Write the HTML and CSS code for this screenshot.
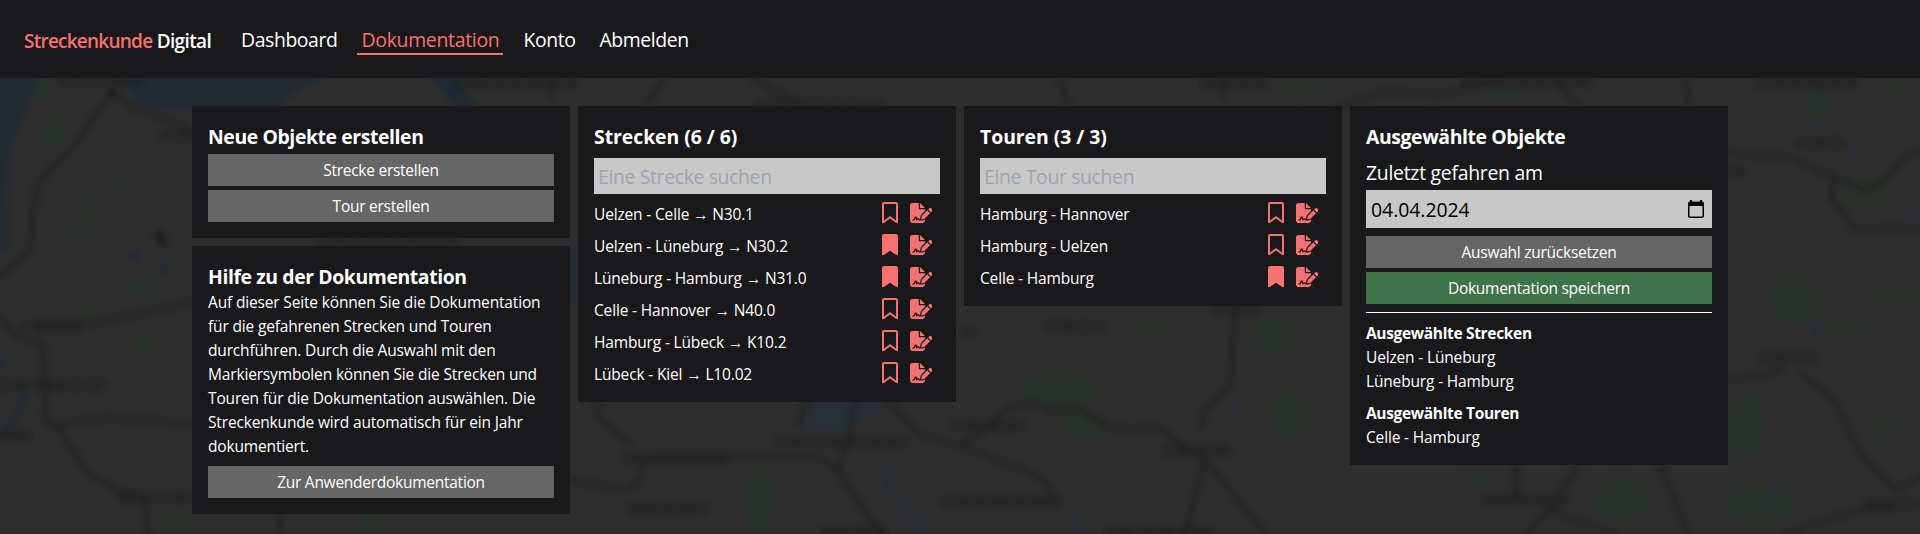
FILE: index.html
```html
<!DOCTYPE html>
<html lang="de">
<head>
<meta charset="utf-8">
<title>Streckenkunde Digital</title>
<link rel="stylesheet" href="styles.css">
</head>
<body>
<svg class="defs" width="0" height="0" aria-hidden="true">
  <symbol id="mark" viewBox="0 0 384 512"><path d="M0 48C0 21.500 21.500 0 48 0V441.400l130.100-92.900c8.300-6 19.600-6 27.900 0L336 441.400V48H48V0H336c26.500 0 48 21.500 48 48V488c0 9-5 17.200-13 21.300s-17.600 3.400-24.900-1.800L192 397.500 37.900 507.500c-7.300 5.200-16.900 5.900-24.900 1.800S0 497 0 488V48z"/></symbol>
  <symbol id="marked" viewBox="0 0 384 512"><path d="M0 48V487.700C0 501.100 10.900 512 24.300 512c5 0 9.900-1.500 14-4.400L192 400 345.700 507.600c4.100 2.900 9 4.400 14 4.400c13.400 0 24.300-10.900 24.300-24.300V48c0-26.500-21.500-48-48-48H48C21.500 0 0 21.500 0 48z"/></symbol>
  <symbol id="sign" viewBox="0 0 576 512"><path d="M64 0C28.700 0 0 28.700 0 64V448c0 35.300 28.700 64 64 64H320c35.300 0 64-28.700 64-64V428.700c-2.700 1.100-5.400 2-8.200 2.700l-60.100 15c-3 .7-6 1.200-9 1.400c-.9 .1-1.800 .2-2.700 .2H240c-6.100 0-11.600-3.400-14.300-8.800l-8.800-17.700c-1.700-3.400-5.100-5.500-8.800-5.500s-7.200 2.100-8.800 5.500l-8.800 17.700c-2.900 5.900-9.200 9.400-15.700 8.800s-12.100-5.100-13.900-11.300L144 381l-9.800 32.800c-6.100 20.300-24.800 34.200-46 34.200H80c-8.800 0-16-7.200-16-16s7.200-16 16-16h8.200c7.100 0 13.300-4.600 15.300-11.400l14.900-49.500c3.400-11.300 13.800-19.100 25.600-19.100s22.200 7.700 25.600 19.100l11.600 38.600c7.400-6.200 16.800-9.700 26.800-9.700c15.900 0 30.400 9 37.500 23.200l4.400 8.800h8.900c-3.100-8.800-3.700-18.400-1.400-27.800l15-60.100c2.800-11.300 8.600-21.500 16.800-29.700L384 203.600V160H256c-17.700 0-32-14.300-32-32V0H64zM256 0V128H384L256 0zM549.800 139.700c-15.600-15.600-40.900-15.600-56.600 0l-29.400 29.400 71 71 29.400-29.400c15.600-15.600 15.600-40.900 0-56.600l-14.400-14.400zM311.900 321c-4.100 4.100-7 9.200-8.400 14.900l-15 60.100c-1.400 5.500 .2 11.200 4.200 15.200s9.700 5.600 15.200 4.200l60.100-15c5.600-1.400 10.800-4.300 14.900-8.400L512.100 262.700l-71-71L311.900 321z"/></symbol>
</svg>

<svg class="map" viewBox="0 78 1920 456" width="1920" height="456" aria-hidden="true">
  <g class="map-soft">
    <g class="green">
      <ellipse cx="55" cy="130" rx="14" ry="16"/><ellipse cx="42" cy="92" rx="10" ry="10"/><ellipse cx="127" cy="185" rx="8" ry="8"/><ellipse cx="85" cy="212" rx="9" ry="16"/><ellipse cx="75" cy="237" rx="18" ry="6"/>
      <ellipse cx="143" cy="288" rx="14" ry="10"/><ellipse cx="90" cy="316" rx="14" ry="8"/><ellipse cx="145" cy="345" rx="10" ry="16"/><ellipse cx="178" cy="525" rx="16" ry="10"/><ellipse cx="372" cy="526" rx="12" ry="14"/>
      <ellipse cx="760" cy="500" rx="16" ry="34"/><ellipse cx="1060" cy="390" rx="40" ry="20"/><ellipse cx="1085" cy="425" rx="26" ry="16"/><ellipse cx="1290" cy="415" rx="20" ry="26"/><ellipse cx="1275" cy="335" rx="24" ry="18"/>
      <ellipse cx="1300" cy="90" rx="28" ry="7"/><ellipse cx="1150" cy="330" rx="14" ry="12"/><ellipse cx="1505" cy="95" rx="30" ry="6"/><ellipse cx="1820" cy="105" rx="14" ry="18"/><ellipse cx="1865" cy="190" rx="24" ry="18"/>
      <ellipse cx="1795" cy="300" rx="26" ry="26"/><ellipse cx="1895" cy="295" rx="24" ry="9"/><ellipse cx="1840" cy="330" rx="26" ry="8"/><ellipse cx="1745" cy="425" rx="20" ry="34"/><ellipse cx="1760" cy="505" rx="34" ry="20"/>
      <ellipse cx="1885" cy="425" rx="10" ry="16"/><ellipse cx="1480" cy="480" rx="18" ry="9"/><ellipse cx="1620" cy="500" rx="30" ry="22"/><ellipse cx="1895" cy="90" rx="14" ry="10"/>
    </g>
    <g class="water">
      <path d="M-10 70H42L26 112L10 150L4 182L-10 220z"/><path d="M122 84L140 70H340L300 88L280 106H192L150 108z"/><path d="M425 70H450L480 108H455z"/>
    </g>
    <g class="river">
      <path d="M140 98L165 106H280"/><path d="M436 78L466 106"/><path d="M3 160V250"/><path d="M25 392L18 415L6 430"/><path d="M134 253v6M163 266l2 5M2 360v10M574 250v50"/>
      <path class="faint" d="M882 470L900 505L925 534M1235 400v10M1216 505v6M1072 510l8 20"/>
      <path class="faint" d="M1818 90v12M1812 125v6M1853 150v18M1794 172v3M1820 325l-6 8M1778 470L1768 505M1915 210v6"/>
    </g>
    <path class="lake" d="M805 402H885L870 420L835 430L800 428z"/>
    <g class="road">
      <path d="M113 93L95 115L75 145L40 180L33 210L30 250L-4 280M113 93L135 108L180 125L200 135M-4 312L15 335L42 342L45 380L45 420L60 430L85 470L115 490L145 500L148 536M20 326L80 325L120 318L200 300M55 425L110 417L200 426M280 510v26"/>
      <path d="M595 396L600 420L632 445M570 480L620 490L635 485L645 462M655 457H820L838 470L850 490L882 536M808 396L797 428M855 396L850 430L838 470M885 400L920 435L960 445L1010 465L1045 480L1055 500M960 445L985 430L1005 410L1030 402L1050 410H1080L1105 425L1130 430L1160 428L1175 440L1205 460M1235 310L1230 385L1205 410L1200 430M1205 460L1185 536M1205 460L1230 490L1267 536"/>
      <path d="M548 78L552 100M665 78L645 106M750 78L805 106M1060 78L1068 106M1222 78V100M1330 110L1380 92L1440 95L1480 85L1500 78M1555 82L1580 105M1685 78L1690 106"/>
      <path d="M1720 152L1790 158L1830 175L1865 190L1885 180L1905 155L1925 152M1833 178L1832 198L1850 222L1855 230L1925 228M1720 380L1765 375L1785 368M1800 373L1835 400L1850 435L1865 460L1895 490L1925 475M1550 510L1580 462M1550 508L1525 536M1548 510L1620 536M1515 460L1517 500M1658 460L1690 536M1780 536L1860 510L1895 505"/>
    </g>
    <g class="label">
      <path d="M57 80H145M160 135H195M35 327H80M-2 385H108M-4 435H32M118 497H195M455 83H580M755 105H885M622 458H730M775 442H910M950 425H1025M1163 450H1232M1045 327H1105M1212 309H1262M628 509H708M940 502H1062M820 532H890M960 332H978M1200 83H1270M1460 82H1592M1755 82H1858M1795 143H1847M1718 171H1745M1758 358H1818M1482 500H1570M1865 504H1920M1105 533H1215M316 243H460"/>
    </g>
    <g class="spot"><circle cx="113" cy="93" r="4"/><ellipse cx="161" cy="238" rx="4" ry="8" transform="rotate(-30 161 238)"/></g>
  </g>
</svg>

<header class="navbar">
  <div class="brand"><span class="accent">Streckenkunde</span> Digital</div>
  <nav class="links">
    <a class="link">Dashboard</a>
    <a class="link active">Dokumentation</a>
    <a class="link">Konto</a>
    <a class="link">Abmelden</a>
  </nav>
</header>

<main class="board">
  <div class="column">
    <section class="card">
      <h2>Neue Objekte erstellen</h2>
      <button class="btn">Strecke erstellen</button>
      <button class="btn">Tour erstellen</button>
    </section>
    <section class="card">
      <h2>Hilfe zu der Dokumentation</h2>
      <p class="help">Auf dieser Seite können Sie die Dokumentation für die gefahrenen Strecken und Touren durchführen. Durch die Auswahl mit den Markiersymbolen können Sie die Strecken und Touren für die Dokumentation auswählen. Die Streckenkunde wird automatisch für ein Jahr dokumentiert.</p>
      <button class="btn btn-spaced">Zur Anwenderdokumentation</button>
    </section>
  </div>

  <section class="card">
    <h2 class="wide">Strecken (6 / 6)</h2>
    <input class="search" type="text" placeholder="Eine Strecke suchen">
    <ul class="rows">
      <li><span>Uelzen - Celle → N30.1</span><svg class="mark"><use href="#mark"/></svg><svg class="sign"><use href="#sign"/></svg></li>
      <li><span>Uelzen - Lüneburg → N30.2</span><svg class="mark"><use href="#marked"/></svg><svg class="sign"><use href="#sign"/></svg></li>
      <li><span>Lüneburg - Hamburg → N31.0</span><svg class="mark"><use href="#marked"/></svg><svg class="sign"><use href="#sign"/></svg></li>
      <li><span>Celle - Hannover → N40.0</span><svg class="mark"><use href="#mark"/></svg><svg class="sign"><use href="#sign"/></svg></li>
      <li><span>Hamburg - Lübeck → K10.2</span><svg class="mark"><use href="#mark"/></svg><svg class="sign"><use href="#sign"/></svg></li>
      <li><span>Lübeck - Kiel → L10.02</span><svg class="mark"><use href="#mark"/></svg><svg class="sign"><use href="#sign"/></svg></li>
    </ul>
  </section>

  <section class="card">
    <h2 class="wide">Touren (3 / 3)</h2>
    <input class="search" type="text" placeholder="Eine Tour suchen">
    <ul class="rows">
      <li><span>Hamburg - Hannover</span><svg class="mark"><use href="#mark"/></svg><svg class="sign"><use href="#sign"/></svg></li>
      <li><span>Hamburg - Uelzen</span><svg class="mark"><use href="#mark"/></svg><svg class="sign"><use href="#sign"/></svg></li>
      <li><span>Celle - Hamburg</span><svg class="mark"><use href="#marked"/></svg><svg class="sign"><use href="#sign"/></svg></li>
    </ul>
  </section>

  <section class="card">
    <h2>Ausgewählte Objekte</h2>
    <div class="date-label">Zuletzt gefahren am</div>
    <div class="date"><span>04.04.2024</span>
      <svg class="calendar" viewBox="0 0 16 18"><path d="M2 0h2v1.500h8V0h2v1.500A2 2 0 0 1 16 3.500V16a2 2 0 0 1-2 2H2a2 2 0 0 1-2-2V3.500A2 2 0 0 1 2 1.500zM1.500 6v10a.5 .5 0 0 0 .5 .5h12a.5 .5 0 0 0 .5-.5V6z"/></svg>
    </div>
    <button class="btn btn-spaced">Auswahl zurücksetzen</button>
    <button class="btn btn-save">Dokumentation speichern</button>
    <hr class="rule">
    <h3>Ausgewählte Strecken</h3>
    <div class="picked">Uelzen - Lüneburg</div>
    <div class="picked">Lüneburg - Hamburg</div>
    <h3>Ausgewählte Touren</h3>
    <div class="picked">Celle - Hamburg</div>
  </section>
</main>
</body>
</html>
```
FILE: styles.css
```css
* { box-sizing: border-box; }
body {
  margin: 0;
  height: 534px;
  overflow: hidden;
  position: relative;
  background: #2e2e2e;
  color: #fff;
  font-family: "Open Sans", "Noto Sans", sans-serif;
  font-size: 15.5px;
  line-height: 24px;
  letter-spacing: -0.16px;
}
.defs { position: absolute; }

/* map backdrop */
.map { position: absolute; left: 0; top: 78px; z-index: -1; }
.map-soft { filter: blur(3px); }
.green { fill: #29302a; }
.water { fill: #222a32; }
.lake { fill: #293036; }
.river { fill: none; stroke: #202a38; stroke-width: 9; stroke-linecap: round; stroke-opacity: .65; }
.faint { stroke-width: 7; stroke-opacity: .5; }
.road { fill: none; stroke: #202020; stroke-width: 5; stroke-linejoin: round; stroke-opacity: .7; }
.label { stroke: #1f1f1f; stroke-width: 11; stroke-dasharray: 9 2 6 1 12 2 5 1; stroke-opacity: .6; }
.spot { fill: #191919; }

/* top bar */
.navbar {
  display: flex;
  align-items: center;
  height: 78px;
  padding: 0 24px;
  background: #19191b;
}
.brand { width: 188px; margin-top: 3px; font-size: 19px; font-weight: 600; letter-spacing: -0.64px; white-space: nowrap; }
.accent { color: #f87171; letter-spacing: -0.76px; }
.links { display: flex; gap: 16px; margin-left: 25px; padding-top: 1px; }
.link { padding: 1px 4px 0; font-size: 19.4px; line-height: 27px; letter-spacing: -0.4px; border-bottom: 2px solid transparent; }
.active { color: #f87171; letter-spacing: -0.28px; border-color: #f87171; }

/* cards */
.board {
  display: grid;
  grid-template-columns: repeat(4, 378px);
  gap: 8px;
  align-items: start;
  justify-content: center;
  padding-top: 28px;
}
.column { display: grid; gap: 8px; }
.card { padding: 16px; background: #19191b; }
h2 { margin: 0; padding-top: 1px; font-size: 19.4px; line-height: 27px; font-weight: 700; letter-spacing: -0.4px; }
h2.wide { letter-spacing: -0.04px; }
h3 { margin: 8px 0 0; font-size: 15.5px; line-height: 24px; font-weight: 700; letter-spacing: -0.33px; }
.help { margin: 0; }
.btn {
  display: block;
  width: 100%;
  height: 32px;
  margin: 4px 0 0;
  padding: 0;
  border: 0;
  background: #666;
  color: #fff;
  font: inherit;
  letter-spacing: -0.26px;
  text-align: center;
}
.btn-spaced { margin-top: 8px; }
.btn-save { background: #3f7349; }

.search {
  display: block;
  width: 100%;
  height: 36px;
  margin-top: 8px;
  padding: 0 4px;
  border: 0;
  border-radius: 0;
  background: #c8c8c8;
  font: inherit;
  font-size: 19.4px;
  letter-spacing: -0.35px;
}
.search::placeholder { color: #9ca3af; opacity: 1; }
.rows { margin: 0; padding: 0; list-style: none; }
.rows li { display: flex; align-items: flex-start; height: 32px; padding: 8px 8px 0 0; }
.rows span { flex: 1; }
.rows svg { fill: #f87171; }
.mark { width: 16px; height: 21.33px; margin-right: 12px; }
.sign { width: 22.5px; height: 20px; margin-top: 1px; }

.date-label { margin-top: 8px; padding-top: 1px; font-size: 19.4px; line-height: 27px; letter-spacing: -0.27px; }
.date {
  display: flex;
  align-items: center;
  justify-content: space-between;
  height: 38px;
  margin-top: 4px;
  padding: 0 8px 0 5px;
  background: #c8c8c8;
  color: #000;
  font-size: 19.4px;
  letter-spacing: -0.02px;
}
.date span { padding-top: 1px; }
.calendar { width: 16px; height: 18px; }
.rule { height: 1px; margin: 8px 0; border: 0; background: #fff; }
```
